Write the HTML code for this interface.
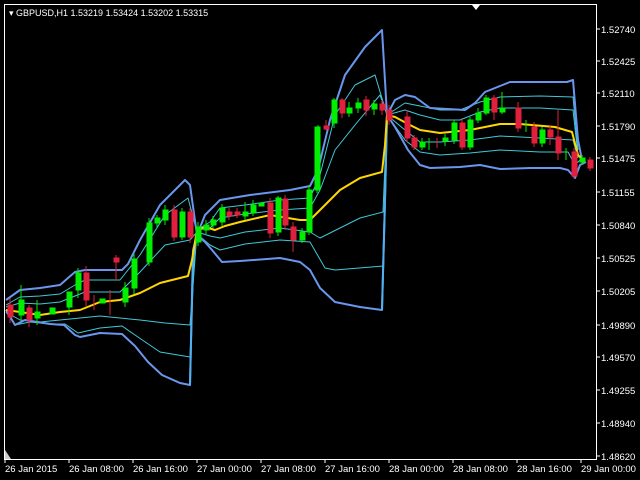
<!DOCTYPE html>
<html><head><meta charset="utf-8"><style>
html,body{margin:0;padding:0;background:#000;width:640px;height:480px;overflow:hidden}
svg{display:block}
text{font-family:"Liberation Sans",sans-serif;font-size:9.5px;fill:#fff}
</style></head><body>
<svg width="640" height="480" viewBox="0 0 640 480">
<rect width="640" height="480" fill="#000"/>
<rect x="4.5" y="4.5" width="592" height="455" fill="none" stroke="#fff" stroke-width="1"/>
<polygon points="472,5 480,5 476,10" fill="#fff"/>
<polygon points="5,450 5,459 11,459" fill="#ccc"/>
<text x="9" y="16" style="font-size:9px">▾ GBPUSD,H1  1.53219 1.53424 1.53202 1.53315</text>
<g>
<text x="601" y="33">1.52740</text><text x="601" y="65">1.52425</text><text x="601" y="97">1.52110</text>
<text x="601" y="130">1.51790</text><text x="601" y="162">1.51475</text><text x="601" y="196">1.51155</text>
<text x="601" y="229">1.50840</text><text x="601" y="262">1.50525</text><text x="601" y="295">1.50205</text>
<text x="601" y="329">1.49890</text><text x="601" y="361">1.49570</text><text x="601" y="394">1.49255</text>
<text x="601" y="427">1.48940</text><text x="601" y="460">1.48620</text>
</g>
<g stroke="#fff" stroke-width="1">
<path d="M596 29h4M596 61h4M596 93h4M596 126h4M596 158h4M596 192h4M596 225h4M596 258h4M596 291h4M596 325h4M596 357h4M596 390h4M596 423h4M596 456h4"/>
<path d="M5 459v4M69 459v4M133 459v4M197 459v4M261 459v4M325 459v4M389 459v4M453 459v4M517 459v4M581 459v4"/>
</g>
<g>
<text x="5" y="472">26 Jan 2015</text><text x="69" y="472">26 Jan 08:00</text><text x="133" y="472">26 Jan 16:00</text>
<text x="197" y="472">27 Jan 00:00</text><text x="261" y="472">27 Jan 08:00</text><text x="325" y="472">27 Jan 16:00</text>
<text x="389" y="472">28 Jan 00:00</text><text x="453" y="472">28 Jan 08:00</text><text x="517" y="472">28 Jan 16:00</text>
<text x="581" y="472">29 Jan 00:00</text>
</g>
<g fill="none" stroke-linejoin="round">
<!-- inner cyan bands -->
<g stroke="#40c8d8" stroke-width="1">
<polyline points="6,305 20,297 40,296 60,294 75,285 85,280 120,280 140,255 165,215 188,198 197,232"/>
<polyline points="6,307 20,303 40,304 60,302 75,296 85,292 120,292 140,272 165,245 190,240 197,232"/>
<polyline points="6,312 20,320 40,322 60,320 80,318 100,316 120,318 140,320 165,323 190,325 197,232"/>
<polyline points="6,312 15,325 30,322 50,324 65,324 78,333 100,328 122,326 135,335 160,352 190,357 195,240 197,232"/>
<polyline points="197,230 210,222 220,208 245,205 280,200 310,198 320,175 335,115 355,85 375,75 387,115"/>
<polyline points="197,230 210,228 220,218 245,214 280,210 310,208 320,190 335,150 355,125 380,95 387,115"/>
<polyline points="197,232 210,236 220,238 245,232 280,228 310,232 320,238 340,228 360,218 383,212 387,115"/>
<polyline points="197,234 210,245 220,250 245,244 280,240 310,242 325,268 335,270 383,266 385,180 387,115"/>
<polyline points="387,115 405,103 420,106 440,110 460,110 480,102 500,97 540,96 573,97 578,150"/>
<polyline points="387,115 405,110 420,115 440,120 460,120 480,112 500,108 540,108 573,110 578,155"/>
<polyline points="387,115 405,130 420,142 440,142 470,140 500,136 540,138 573,140 578,158"/>
<polyline points="387,115 405,140 420,152 440,155 470,153 500,150 540,152 568,152 575,165 580,160"/>
</g>
<!-- outer blue bands -->
<g stroke="#6a96ee" stroke-width="2">
<polyline points="6,300 20,290 40,288 60,285 68,278 75,272 85,270 122,270 128,264 140,240 160,205 175,190 185,180 190,185 197,235"/>
<polyline points="6,310 15,325 25,320 50,324 64,325 75,335 80,337 100,333 122,334 135,346 148,362 162,375 180,383 190,385 193,250 197,235"/>
<polyline points="197,235 205,215 220,200 250,195 290,190 310,186 318,170 330,120 345,75 365,47 382,30 387,115"/>
<polyline points="197,235 205,242 212,250 222,262 240,261 280,258 300,262 310,270 320,288 335,302 360,307 382,310 385,200 387,115"/>
<polyline points="387,115 395,100 405,95 415,97 430,108 465,110 475,103 485,92 500,86 510,82 545,82 567,82 573,80 578,140 582,160"/>
<polyline points="387,115 395,127 408,150 420,165 430,168 460,167 480,165 490,167 500,169 530,168 560,168 568,170 575,178 580,165 586,162"/>
</g>
<g stroke="#50b0f0" stroke-width="2">
<polyline points="190,385 193,260 197,235"/>
<polyline points="382,310 385,200 387,115"/>
</g>
<!-- middle yellow -->
<polyline stroke="#ffd700" stroke-width="2" points="6,310 20,312 40,315 60,312 80,310 100,302 120,300 140,293 160,283 188,276 192,260 197,230 205,227 215,230 225,226 240,222 270,215 300,220 310,220 320,210 340,190 360,178 382,172 385,145 387,115 395,117 410,125 420,130 440,133 470,130 490,126 500,124 520,124 555,127 572,132 578,155 585,162"/>
</g>
<!-- candles -->
<g stroke-width="1">
<g fill="#00ee00" stroke="#00ee00">
<path d="M21 285v35M37 300v25M69 295v20M78 268v30M125 282v25M134 254v40M149 218v48M157 215v12M165 205v20M182 208v32M198 222v24M206 220v14M213 216v12M222 204v22M245 202v18M253 200v16M278 196v40M302 228v15M309 185v50M317 158v35M318 125v38M334 98v30M349 102v15M358 98v15M374 100v15M422 138v12M429 138v12M445 134v12M454 120v24M470 117v33M478 108v15M486 95v20M502 92v22M526 120v12M542 127v20M566 148v12M582 155v10"/>
<rect x="19" y="300" width="5" height="15"/><rect x="35" y="312" width="5" height="6"/><rect x="50" y="308" width="5" height="6"/>
<rect x="67" y="292" width="5" height="15"/><rect x="76" y="273" width="5" height="17"/><rect x="100" y="299" width="5" height="4"/>
<rect x="123" y="288" width="5" height="14"/><rect x="132" y="259" width="5" height="29"/><rect x="147" y="223" width="5" height="39"/>
<rect x="155" y="218" width="5" height="5"/><rect x="163" y="210" width="5" height="10"/><rect x="180" y="212" width="5" height="25"/>
<rect x="196" y="227" width="5" height="15"/><rect x="204" y="225" width="5" height="5"/><rect x="211" y="220" width="5" height="5"/>
<rect x="220" y="208" width="5" height="14"/><rect x="243" y="212" width="5" height="4"/><rect x="251" y="205" width="5" height="8"/>
<rect x="259" y="203" width="5" height="3"/><rect x="276" y="198" width="5" height="34"/><rect x="300" y="232" width="5" height="8"/>
<rect x="307" y="190" width="5" height="42"/><rect x="315" y="127" width="5" height="63"/><rect x="332" y="100" width="5" height="23"/>
<rect x="347" y="108" width="5" height="5"/><rect x="356" y="103" width="5" height="5"/><rect x="372" y="104" width="5" height="5"/>
<rect x="420" y="142" width="5" height="5"/><rect x="443" y="138" width="5" height="3"/><rect x="452" y="123" width="5" height="17"/>
<rect x="468" y="120" width="5" height="27"/><rect x="476" y="113" width="5" height="7"/><rect x="484" y="98" width="5" height="15"/>
<rect x="500" y="108" width="5" height="4"/><rect x="540" y="130" width="5" height="13"/><rect x="580" y="158" width="5" height="4"/>
</g>
<g fill="#e0203c" stroke="#e0203c">
<path d="M10 298v25M29 305v22M86 266v40M94 295v15M110 290v25M116 255v25M174 205v36M190 208v35M229 208v12M237 208v10M270 198v40M285 195v35M293 222v30M326 120v10M342 98v20M366 96v20M382 100v15M389 105v20M407 110v32M414 135v15M437 138v10M462 118v32M494 95v25M518 102v30M534 122v25M550 125v20M558 110v50M574 148v30M590 157v14"/>
<rect x="8" y="305" width="5" height="12"/><rect x="27" y="308" width="5" height="12"/><rect x="84" y="273" width="5" height="27"/>
<rect x="114" y="258" width="5" height="4"/><rect x="172" y="210" width="5" height="27"/><rect x="188" y="212" width="5" height="25"/>
<rect x="227" y="212" width="5" height="4"/><rect x="235" y="212" width="5" height="3"/><rect x="268" y="203" width="5" height="30"/>
<rect x="283" y="199" width="5" height="26"/><rect x="291" y="227" width="5" height="13"/><rect x="324" y="126" width="5" height="3"/>
<rect x="340" y="100" width="5" height="13"/><rect x="364" y="100" width="5" height="10"/><rect x="380" y="104" width="5" height="6"/>
<rect x="387" y="110" width="5" height="10"/><rect x="405" y="117" width="5" height="21"/><rect x="412" y="138" width="5" height="9"/>
<rect x="460" y="123" width="5" height="24"/><rect x="492" y="98" width="5" height="14"/><rect x="516" y="108" width="5" height="20"/>
<rect x="532" y="127" width="5" height="16"/><rect x="548" y="130" width="5" height="7"/><rect x="556" y="137" width="5" height="16"/>
<rect x="572" y="152" width="5" height="24"/><rect x="588" y="160" width="5" height="8"/>
</g>
</g>
</svg>
</body></html>
